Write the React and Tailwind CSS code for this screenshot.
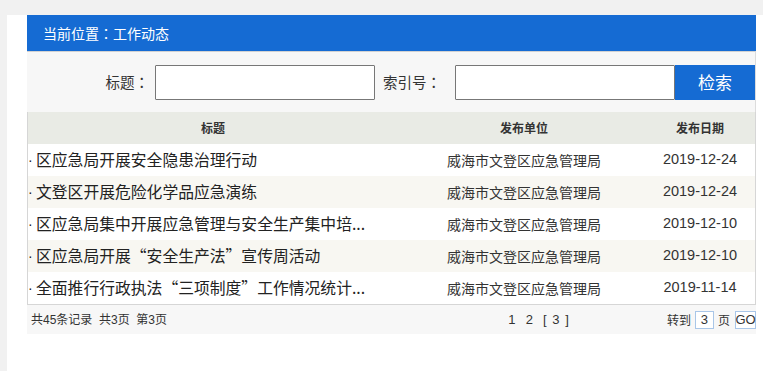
export default function App() {
  const rows = [
    { t: "区应急局开展安全隐患治理行动", d: "2019-12-24" },
    { t: "文登区开展危险化学品应急演练", d: "2019-12-24" },
    { t: "区应急局集中开展应急管理与安全生产集中培...", d: "2019-12-10" },
    { t: "区应急局开展“安全生产法”宣传周活动", d: "2019-12-10" },
    { t: "全面推行行政执法“三项制度”工作情况统计...", d: "2019-11-14" },
  ];
  const font = { fontFamily: '"Liberation Sans", "Noto Sans CJK SC", sans-serif' };
  const cjk = { fontFamily: '"Noto Sans CJK SC", sans-serif' };
  const tc = { fontFamily: '"Noto Sans CJK TC", sans-serif' };
  return (
    <div className="w-[763px] h-[371px] bg-[#f1f1f1] pt-[15px] overflow-hidden" style={font}>
      <div className="ml-[7px] h-[356px] bg-white pl-[20px]">
        <div className="w-[729px]">
          <div className="h-[36px] bg-[#156bd3] flex items-center pl-[16px] text-white text-[14px]" style={tc}>
            当前位置：工作动态
          </div>
          <div className="border-t border-[#d2d2d2] border-r border-r-[#dcdcdc] bg-[#f7f7f7] h-[61px] flex items-center justify-end text-[#333] text-[14.5px]" style={tc}>
            <span className="mr-[6px]">标题：</span>
            <div className="w-[220px] h-[35px] bg-white border border-[#777] rounded-[1px]"></div>
            <span className="ml-[8px] mr-[14px]">索引号：</span>
            <div className="w-[220px] h-[35px] bg-white border border-[#777] rounded-[1px]"></div>
            <div className="w-[80px] h-[35px] bg-[#156bd3] text-white text-[17px] flex items-center justify-center" style={cjk}>检索</div>
          </div>
          <div className="border-l border-r border-b border-[#d6d6d6]">
            <div className="flex h-[32px] bg-[#e9ebe5] items-center text-[12px] font-bold text-[#333]" style={cjk}>
              <div className="w-[370px] text-center">标题</div>
              <div className="w-[252px] text-center">发布单位</div>
              <div className="w-[100px] text-center">发布日期</div>
            </div>
            {rows.map((r, i) => (
              <div key={i} className={`flex h-[32px] items-center ${i % 2 === 1 ? "bg-[#f8f7f2]" : "bg-white"}`}>
                <div className="w-[370px] text-[15.8px] text-[#222] whitespace-nowrap flex items-center">
                  <span className="w-[8px] text-[14px]">·</span>
                  <span style={cjk}>{r.t}</span>
                </div>
                <div className="w-[252px] text-center text-[14px] text-[#333]" style={cjk}>威海市文登区应急管理局</div>
                <div className="w-[100px] text-center text-[14.5px] text-[#333]">{r.d}</div>
              </div>
            ))}
          </div>
          <div className="h-[29px] bg-[#f7f7f7] flex items-center text-[12px] text-[#333]">
            <div className="w-[370px] pl-[4px]">共45条记录&nbsp;&nbsp;共3页&nbsp;&nbsp;第3页</div>
            <div className="w-[252px] pl-[32px] text-center text-[13px] tracking-[1px]">1&nbsp;&nbsp;2&nbsp;&nbsp;[&nbsp;3&nbsp;]</div>
            <div className="flex-1 flex items-center justify-end text-[12px]">
              <span className="mr-[4px]" style={cjk}>转到</span>
              <div className="w-[19px] h-[18px] border border-[#a9c6e8] bg-white flex items-center justify-center text-[13px]">3</div>
              <span className="ml-[4px] mr-[5px]" style={cjk}>页</span>
              <div className="w-[21px] h-[18px] border border-[#a9c6e8] bg-white flex items-center justify-center text-[13px]">GO</div>
            </div>
          </div>
        </div>
      </div>
    </div>
  );
}
